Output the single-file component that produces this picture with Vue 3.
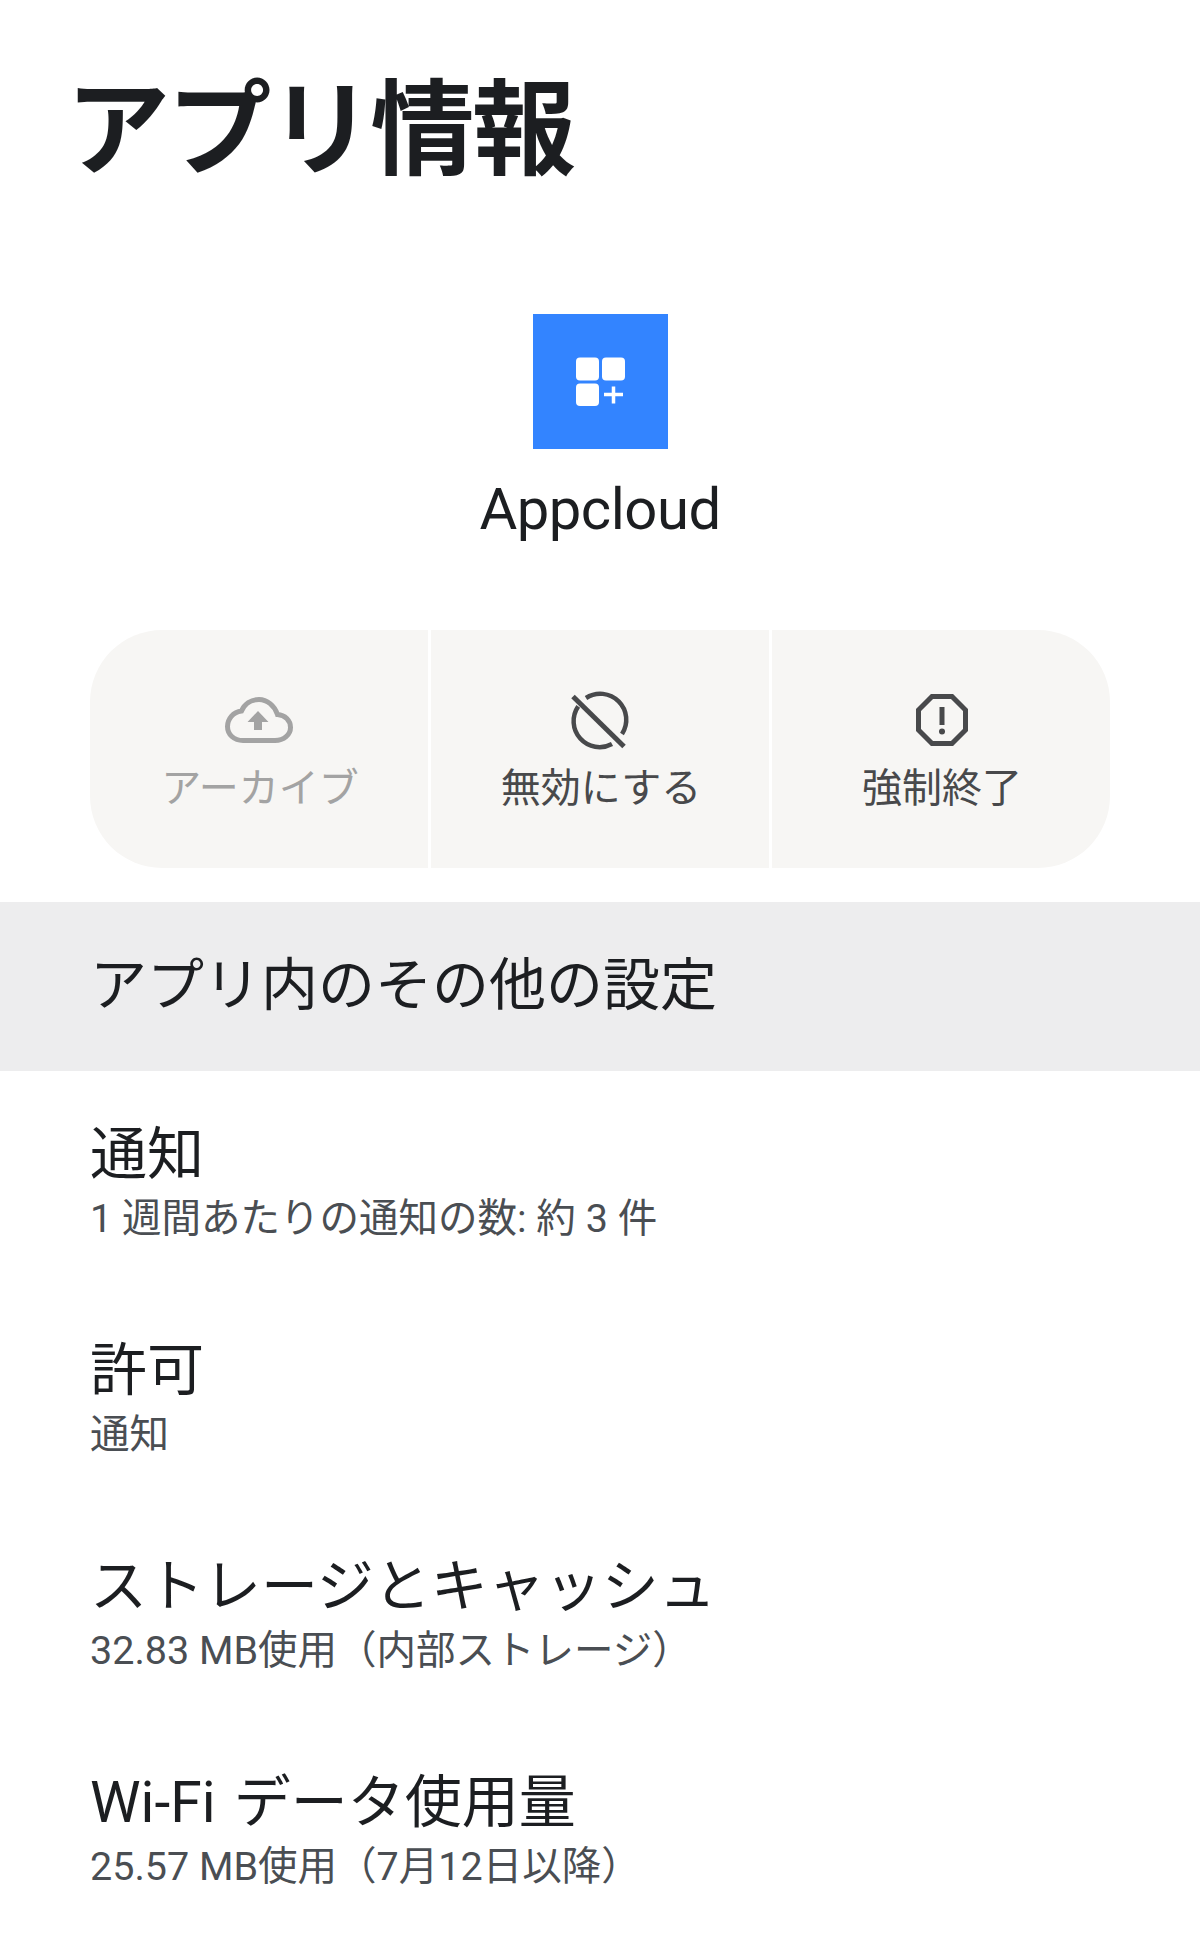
<script setup>
const actions = [
  { label: 'アーカイブ', icon: 'cloud', off: true },
  { label: '無効にする', icon: 'ban', off: false },
  { label: '強制終了', icon: 'stop', off: false }
]
const rows = [
  { title: '通知', sub: '1 週間あたりの通知の数: 約 3 件' },
  { title: '許可', sub: '通知' },
  { title: 'ストレージとキャッシュ', sub: '32.83 MB使用（内部ストレージ）' },
  { title: 'Wi-Fi データ使用量', sub: '25.57 MB使用（7月12日以降）' }
]
</script>

<template>
  <main class="page">
    <h1 class="title">アプリ情報</h1>
    <section class="app">
      <div class="app-icon">
        <svg width="50" height="50" viewBox="-1 -0.5 50 50">
          <rect x="0" y="0" width="23" height="23" rx="4" fill="#fff" />
          <rect x="26" y="0" width="23" height="23" rx="4" fill="#fff" />
          <rect x="0" y="26" width="23" height="22.500" rx="4" fill="#fff" />
          <path d="M28 37H47M37.500 29V46" stroke="#fff" stroke-width="3.500" fill="none" />
        </svg>
      </div>
      <div class="app-name">Appcloud</div>
    </section>
    <section class="actions">
      <button v-for="a in actions" :key="a.label" class="action" :class="{ off: a.off }">
        <svg class="action-icon" width="72" height="72" viewBox="0 0 72 72">
          <template v-if="a.icon === 'cloud'">
            <path d="M20 56.500H52C61 56.500 67.500 50.500 67.500 43.500C67.500 36.500 62 31 54.500 30.500C51.500 21.500 44 15.500 36 15.500C28 15.500 21.500 20 18.500 27C10 28 4.500 35 4.500 42.500C4.500 50.500 11 56.500 20 56.500Z" fill="none" stroke="currentColor" stroke-width="5" />
            <path d="M35 27L45.500 38H39V46H31V38H24.500Z" fill="currentColor" />
          </template>
          <template v-else-if="a.icon === 'ban'">
            <path d="M22 14A26 26 0 0 1 58 50M48 60A26 26 0 0 1 14.200 22.400" fill="none" stroke="currentColor" stroke-width="4.500" />
            <path d="M9 12.500L60 62.500" stroke="currentColor" stroke-width="5" fill="none" />
          </template>
          <template v-else>
            <path d="M27 12.500H47L60.500 26V46L47 59.500H27L13.500 46V26Z" fill="none" stroke="currentColor" stroke-width="5" />
            <path d="M37 23V41" stroke="currentColor" stroke-width="5" fill="none" />
            <circle cx="37" cy="47.500" r="3" fill="currentColor" />
          </template>
        </svg>
        <span class="action-label">{{ a.label }}</span>
      </button>
    </section>
    <h2 class="section-head">アプリ内のその他の設定</h2>
    <ul class="rows">
      <li v-for="r in rows" :key="r.title" class="row">
        <div class="row-title">{{ r.title }}</div>
        <div class="row-sub">{{ r.sub }}</div>
      </li>
    </ul>
  </main>
</template>

<style>
html, body { margin: 0; background: #fff; }
</style>

<style scoped>
.page {
  width: 1200px;
  height: 1935px;
  overflow: hidden;
  background: #fff;
  font-family: Roboto, "Noto Sans CJK JP", sans-serif;
  color: #1c1e21;
}
.title {
  margin: 0;
  padding: 67px 0 0 66px;
  height: 191px;
  box-sizing: border-box;
  font-size: 104px;
  line-height: 130px;
  font-weight: 700;
  letter-spacing: -2.500px;
}
.app {
  display: flex;
  flex-direction: column;
  align-items: center;
  padding-top: 123px;
  height: 439px;
  box-sizing: border-box;
}
.app-icon {
  width: 135px;
  height: 135px;
  background: #3384ff;
  display: flex;
  align-items: center;
  justify-content: center;
}
.app-name {
  margin-top: 20px;
  font-size: 58px;
  line-height: 80px;
  font-weight: 400;
  letter-spacing: -0.500px;
}
.actions {
  display: grid;
  grid-template-columns: 1fr 1fr 1fr;
  gap: 3px;
  margin: 0 90px;
  height: 238px;
  border-radius: 72px;
  overflow: hidden;
}
.action {
  appearance: none;
  border: 0;
  padding: 54px 0 0;
  background: #f7f6f4;
  display: flex;
  flex-direction: column;
  align-items: center;
  font-family: inherit;
  color: #48494b;
}
.action.off { color: #a3a3a3; }
.action-icon { display: block; }
.action-label {
  font-size: 40px;
  line-height: 50px;
  margin: 8px 0 0 2px;
}
.section-head {
  margin: 34px 0 0;
  height: 169px;
  background: #ededee;
  padding-left: 90px;
  font-size: 57px;
  font-weight: 400;
  line-height: 167px;
}
.rows { list-style: none; margin: 0; padding: 0 0 0 90px; }
.row { height: 216px; padding-top: 46px; box-sizing: border-box; }
.row-title { font-size: 57px; line-height: 76px; word-spacing: 4px; }
.row-sub { font-size: 39.500px; line-height: 50px; margin-top: 1px; color: #4a4e53; }
</style>
